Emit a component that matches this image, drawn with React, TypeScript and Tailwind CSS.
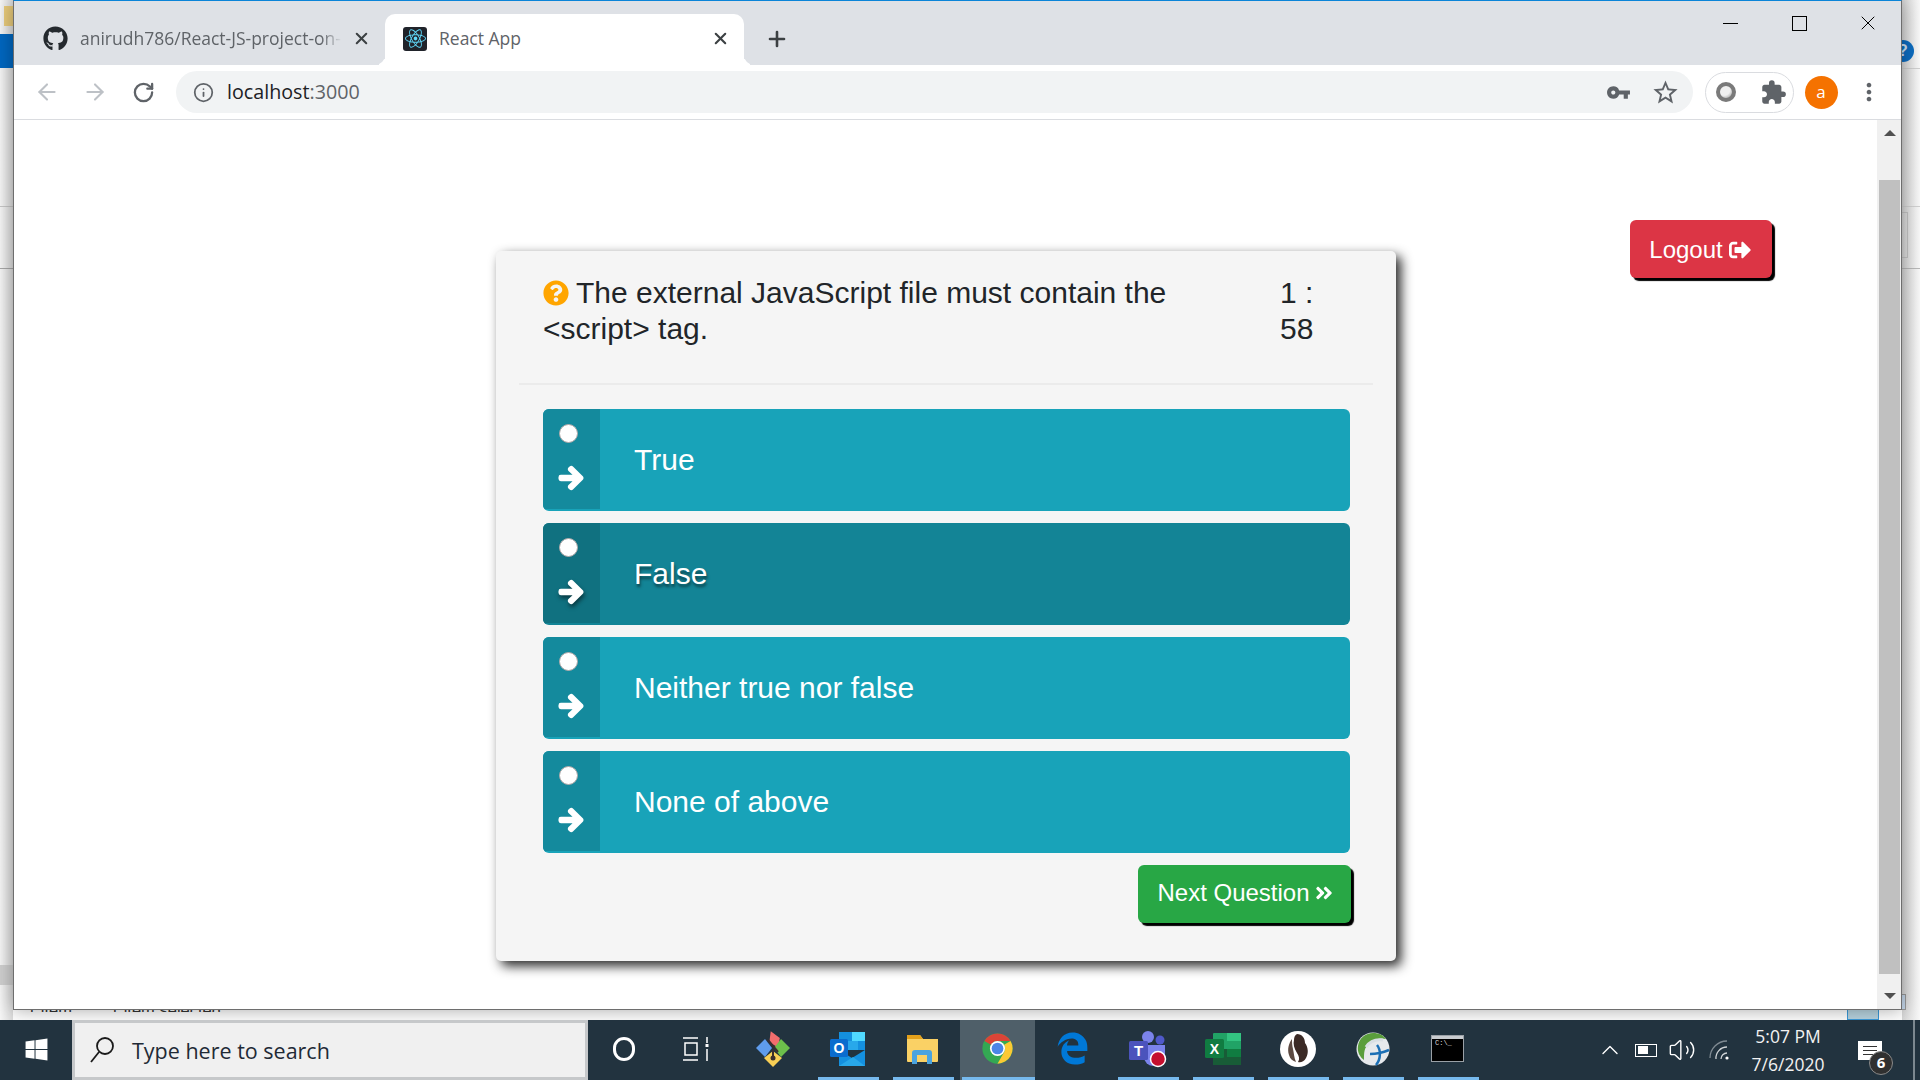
import React from "react";
import { FaGithub, FaReact, FaArrowRight, FaQuestionCircle, FaSignOutAlt, FaAngleDoubleRight, FaWindows, FaEdgeLegacy } from "react-icons/fa";
import { MdVpnKey, MdStarBorder, MdExtension, MdMoreVert } from "react-icons/md";
import { ArrowLeft, ArrowRight, RotateCw, Info, X, Plus, ChevronUp, Volume2 } from "lucide-react";

const options = [
  { label: "True", active: false },
  { label: "False", active: true },
  { label: "Neither true nor false", active: false },
  { label: "None of above", active: false },
];

function Option({ label, active }: { label: string; active: boolean }) {
  return (
    <div className={active ? "flex h-[102px] items-start overflow-hidden rounded-[6px] bg-[#138496]" : "flex h-[102px] items-start overflow-hidden rounded-[6px] bg-[#18a3b9]"}>
      <div className={active ? "flex h-[100px] w-[57px] shrink-0 flex-col items-start bg-[#107180] pl-[16px] pt-[15px]" : "flex h-[100px] w-[57px] shrink-0 flex-col items-start bg-[#148a9d] pl-[16px] pt-[15px]"}>
        <span className="block h-[19px] w-[19px] rounded-full border border-[#b0a8a8] bg-white" />
        <FaArrowRight stroke="currentColor" strokeWidth={45} className={active ? "ml-[-1px] mt-[22px] text-[26px] text-white drop-shadow-[1px_3px_2px_rgba(0,0,0,0.5)]" : "ml-[-1px] mt-[22px] text-[26px] text-white"} />
      </div>
      <div className={active ? "flex h-[102px] items-center pb-[2px] pl-[34px] text-[30px] text-white [text-shadow:1px_3px_3px_rgba(0,0,0,0.5)]" : "flex h-[102px] items-center pb-[2px] pl-[34px] text-[30px] text-white"}>{label}</div>
    </div>
  );
}

function Chrome() {
  return (
    <svg width="33" height="33" viewBox="0 0 48 48">
      <circle cx="24" cy="24" r="22" fill="#34a853" />
      <path d="M24 2a22 22 0 0 1 19.05 11H24a11 11 0 0 0-9.53 5.5L5 13A22 22 0 0 1 24 2z" fill="#db4437" />
      <path d="M43.05 13A22 22 0 0 1 24 46l9.53-16.5A11 11 0 0 0 33.5 18.5L43.05 13z" fill="#fcc934" />
      <circle cx="24" cy="24" r="11" fill="#fff" />
      <circle cx="24" cy="24" r="8.5" fill="#4a86e8" />
    </svg>
  );
}

function Git() {
  return (
    <svg width="34" height="38" viewBox="0 0 34 38">
      <path d="M16 1l8 8-3 9-8-6z" fill="#f26d6d" transform="rotate(-8 17 10)" />
      <path d="M0 18l9-9 7 9-7 9z" fill="#5f9cec" />
      <path d="M34 18l-9-9-7 9 7 9z" fill="#6dbf4b" />
      <path d="M17 37l-9-9 9-7 9 7z" fill="#f8cf55" />
      <path d="M12 10l10 12M17 20v8" stroke="#3a2d2d" strokeWidth="2" />
      <circle cx="17" cy="28" r="2.5" fill="#3a2d2d" />
    </svg>
  );
}

function Outlook() {
  return (
    <svg width="36" height="34" viewBox="0 0 36 34">
      <rect x="9" y="0" width="26" height="18" fill="#1490df" />
      <rect x="22" y="0" width="13" height="9" fill="#50d9ff" />
      <rect x="16" y="9" width="12" height="9" fill="#28a8ea" />
      <path d="M9 18l13 8 13-8v16H9z" fill="#1490df" />
      <path d="M9 34l14-9 12 9z" fill="#28a8ea" />
      <rect x="0" y="7" width="18" height="18" rx="1.5" fill="#0a6cce" />
      <text x="9" y="21" textAnchor="middle" fontSize="14" fontWeight="700" fill="#fff" fontFamily="Liberation Sans, sans-serif">O</text>
    </svg>
  );
}

function Folder() {
  return (
    <svg width="33" height="30" viewBox="0 0 33 30">
      <path d="M1 1h13l3 4h15v22a1 1 0 0 1-1 1H2a1 1 0 0 1-1-1z" fill="#fad165" />
      <path d="M1 1h13l3 4H1z" fill="#e4a11b" />
      <path d="M6 30V19a3 3 0 0 1 3-3h14a3 3 0 0 1 3 3v11h-5v-9H11v9z" fill="#4aa3df" />
    </svg>
  );
}

function Teams() {
  return (
    <svg width="38" height="38" viewBox="0 0 38 38">
      <circle cx="19" cy="7" r="6" fill="#7b83eb" />
      <circle cx="31" cy="10" r="4.5" fill="#5059c9" />
      <path d="M15 15h21v13a8 8 0 0 1-8 8h-4a9 9 0 0 1-9-9z" fill="#7b83eb" />
      <rect x="0" y="11" width="19" height="19" rx="1.5" fill="#4b53bc" />
      <text x="9.5" y="26" textAnchor="middle" fontSize="15" fontWeight="700" fill="#fff" fontFamily="Liberation Sans, sans-serif">T</text>
      <circle cx="29" cy="29" r="7.5" fill="#c50f2e" stroke="#fff" strokeWidth="1.5" />
    </svg>
  );
}

function Excel() {
  return (
    <svg width="36" height="32" viewBox="0 0 36 32">
      <rect x="8" y="0" width="28" height="32" rx="1" fill="#21a366" />
      <rect x="22" y="0" width="14" height="8" fill="#33c481" />
      <rect x="8" y="16" width="14" height="16" fill="#185c37" />
      <rect x="22" y="16" width="14" height="8" fill="#107c41" />
      <rect x="22" y="24" width="14" height="8" fill="#185c37" />
      <rect x="0" y="6" width="19" height="19" rx="1.5" fill="#107c41" />
      <text x="9.5" y="21" textAnchor="middle" fontSize="14" fontWeight="700" fill="#fff" fontFamily="Liberation Sans, sans-serif">X</text>
    </svg>
  );
}

function DBeaver() {
  return (
    <svg width="36" height="36" viewBox="0 0 36 36">
      <circle cx="18" cy="18" r="18" fill="#fff" />
      <path d="M17 3c5 0 8 4 8 9 3 4 4 10 1 15-2 4-6 5-8 4 2-3 1-6-1-9-3-5-4-9-3-13 0-3 1-5 3-6z" fill="#3b2a25" />
      <path d="M12 8c-3 4-5 10-3 16 1 4 4 6 7 7-2-4-2-9-3-13-1-4-1-7-1-10z" fill="#5c4a42" />
    </svg>
  );
}

function AnyConnect() {
  return (
    <svg width="34" height="34" viewBox="0 0 34 34">
      <circle cx="17" cy="17" r="16.5" fill="#e6e9ec" />
      <path d="M2 14C3 6 10 1 17 1c6 0 10 2 13 6-7-2-14 1-19 7-3 3-3 8-3 14C4 25 1 20 2 14z" fill="#5a9e3c" />
      <path d="M10 15c4-6 10-8 17-7" stroke="#d9dfe4" strokeWidth="3" fill="none" />
      <path d="M21 13c4 5 4 14-1 20M14 22c6 0 12-1 19-4" stroke="#1b6fb5" strokeWidth="2.5" fill="none" />
    </svg>
  );
}

function Cmd() {
  return (
    <div className="flex h-[27px] w-[33px] flex-col border border-[#9aa0a6] bg-black">
      <div className="h-[3px] w-full bg-[#c9ccd0]" />
      <span className="pl-[3px] font-['Liberation_Mono',monospace] text-[7px] leading-[9px] text-[#ddd]">C:\_</span>
    </div>
  );
}

function AppButton({ children, on, cur }: { children: React.ReactNode; on?: boolean; cur?: boolean }) {
  return (
    <div className={cur ? "relative flex h-[60px] w-[75px] shrink-0 items-center justify-center bg-[#4f5f69]" : "relative flex h-[60px] w-[75px] shrink-0 items-center justify-center"}>
      <div className="mt-[-3px] flex items-center justify-center">{children}</div>
      {on ? <span className={cur ? "absolute bottom-0 left-[2px] right-0 h-[3px] bg-[#76b9ed]" : "absolute bottom-0 left-[8px] h-[3px] w-[61px] bg-[#76b9ed]"} /> : null}
    </div>
  );
}

export default function App() {
  return (
    <div className="relative h-[1080px] w-[1920px] overflow-hidden bg-white font-['Liberation_Sans',sans-serif]">
      {/* desktop behind the browser window */}
      <div className="absolute left-0 top-0 h-[1020px] w-[13px] bg-gradient-to-r from-[#f6f6f6] to-[#dcdcdc]" />
      <div className="absolute left-[4px] top-[6px] h-[20px] w-[9px] bg-[#e9cb7b]" />
      <div className="absolute left-0 top-[34px] h-[34px] w-[13px] bg-[#0067c0]" />
      <div className="absolute left-0 top-[206px] h-px w-[13px] bg-[#c6c6c6]" />
      <div className="absolute left-0 top-[268px] h-px w-[13px] bg-[#a8a8a8]" />
      <div className="absolute left-0 top-[965px] h-[20px] w-[13px] bg-[#cfcfcf]" />
      <div className="absolute right-0 top-0 h-[1020px] w-[18px] bg-gradient-to-l from-[#f8f8f8] to-[#d6d6d6]" />
      <div className="absolute right-0 top-[68px] h-px w-[18px] bg-[#cfcfcf]" />
      <div className="absolute right-0 top-[206px] h-px w-[18px] bg-[#d0d0d0]" />
      <div className="absolute right-0 top-[268px] h-px w-[18px] bg-[#b8b8b8]" />
      <div className="absolute left-[1900px] top-[212px] h-[46px] w-[8px] border border-[#c4c4c4]" />
      <div className="absolute left-[1892px] top-[40px] flex h-[22px] w-[22px] items-center justify-center rounded-full bg-[#0d6cc0] text-[16px] font-bold text-[#cfe2f3]">?</div>
      <div className="absolute left-[1847px] top-[1000px] h-[20px] w-[32px] border border-[#3a9ad9] bg-[#b8d4e0]" />
      <div className="absolute left-[1879px] top-[994px] h-[16px] w-[27px] border border-[#9a9a9a] bg-[#c5d7ea]" />
      <div className="absolute left-[27px] top-[1002px] h-[10px] overflow-hidden text-[16.5px] leading-[16px] text-[#333]">
        <span className="mr-[38px]">1 item</span>
        <span>1 item selected</span>
      </div>

      {/* browser window */}
      <div className="absolute left-[13px] top-0 flex h-[1010px] w-[1889px] flex-col border-x border-b border-t border-x-[#6e6e6e] border-b-[#6e6e6e] border-t-[#0a84d8] bg-white shadow-[0_0_18px_rgba(0,0,0,0.35)]">
        {/* tab strip */}
        <div className="flex h-[64px] shrink-0 items-end bg-[#dee1e6] font-['Open_Sans',sans-serif] text-[17.5px] text-[#5f6368]">
          <div className="flex h-[51px] w-[371px] shrink-0 items-center pb-[2px] pl-[29px]">
            <FaGithub className="shrink-0 text-[25px] text-[#24292e]" />
            <div className="ml-[12px] w-[262px] overflow-hidden whitespace-nowrap [mask-image:linear-gradient(to_right,black_92%,transparent)]">anirudh786/React-JS-project-on-</div>
            <X size={19} strokeWidth={2.6} className="ml-[10px] shrink-0 text-[#3c4043]" />
          </div>
          <div className="relative flex h-[51px] w-[359px] shrink-0 items-center rounded-t-[10px] bg-white pb-[2px] pl-[18px]">
            <span className="absolute -left-[10px] bottom-0 h-[10px] w-[10px] rounded-br-[10px] shadow-[4px_4px_0_0_#ffffff]" />
            <span className="absolute -right-[10px] bottom-0 h-[10px] w-[10px] rounded-bl-[10px] shadow-[-4px_4px_0_0_#ffffff]" />
            <div className="flex h-[24px] w-[24px] shrink-0 items-center justify-center rounded-[3px] bg-[#20232a]">
              <FaReact className="text-[21px] text-[#61dafb]" />
            </div>
            <div className="ml-[12px] whitespace-nowrap">React App</div>
            <X size={19} strokeWidth={2.6} className="absolute left-[326px] text-[#3c4043]" />
          </div>
          <div className="flex h-[51px] w-[66px] items-center justify-center pb-[2px]">
            <Plus size={24} strokeWidth={2.6} className="text-[#3c4043]" />
          </div>
          <div className="ml-auto flex h-full items-start">
            <div className="flex h-[44px] w-[69px] items-center justify-center"><span className="h-px w-[15px] bg-black" /></div>
            <div className="flex h-[44px] w-[70px] items-center justify-center pr-[1px]"><span className="h-[15px] w-[15px] border border-black" /></div>
            <div className="flex h-[44px] w-[66px] items-center justify-center"><X size={24} strokeWidth={1} className="text-black" /></div>
          </div>
        </div>
        {/* toolbar */}
        <div className="flex h-[55px] shrink-0 items-center border-b border-[#dadce0] bg-white pl-[9px] pr-[11px]">
          <div className="flex w-[48px] justify-center"><ArrowLeft size={26} strokeWidth={1.9} className="text-[#bdc1c6]" /></div>
          <div className="flex w-[48px] justify-center"><ArrowRight size={26} strokeWidth={1.9} className="text-[#bdc1c6]" /></div>
          <div className="flex w-[48px] justify-center"><RotateCw size={23} strokeWidth={2.4} className="text-[#5f6368]" /></div>
          <div className="ml-[9px] flex h-[42px] flex-1 items-center rounded-full bg-[#f1f3f4] pl-[17px] pr-[13px]">
            <Info size={21} strokeWidth={2} className="text-[#5f6368]" />
            <div className="ml-[13px] font-['Open_Sans',sans-serif] text-[19.7px] text-[#202124]">localhost<span className="text-[#5f6368]">:3000</span></div>
            <MdVpnKey className="ml-auto text-[25px] text-[#5f6368]" />
            <MdStarBorder className="ml-[20px] text-[29px] text-[#5f6368]" />
          </div>
          <div className="ml-[12px] flex h-[41px] w-[89px] items-center rounded-full border border-[#dadce0] pl-[10px]">
            <span className="block h-[20px] w-[20px] rounded-full border-[4px] border-[#7a7a7a] bg-[radial-gradient(circle_at_35%_30%,#f0f0f0_50%,#909090)]" />
            <MdExtension className="ml-[24px] text-[27px] text-[#5f6368]" />
          </div>
          <div className="flex w-[54px] justify-center">
            <div className="flex h-[33px] w-[33px] items-center justify-center rounded-full bg-[#f57200] font-['Open_Sans',sans-serif] text-[17px] text-white">a</div>
          </div>
          <div className="flex w-[42px] justify-center"><MdMoreVert className="text-[28px] text-[#5f6368]" /></div>
        </div>
        {/* page + scrollbar */}
        <div className="flex min-h-0 flex-1 bg-white">
          <div className="flex flex-1 items-start">
            <div className="ml-[482px] mt-[131px] h-[710px] w-[900px] shrink-0 rounded-[5px] bg-[#f5f5f5] px-[47px] pt-[24px] shadow-[5px_5px_12px_rgba(0,0,0,0.85)]">
              <div className="flex h-[108px] items-start text-[30px] leading-[36px] text-[#212529]">
                <div className="w-[737px] pr-[50px]">
                  <FaQuestionCircle className="mr-[7px] inline-block align-[-3px] text-[26px] text-[#ffa500]" />
                  The external JavaScript file must contain the &lt;script&gt; tag.
                </div>
                <div className="w-[50px]">1 : 58</div>
              </div>
              <div className="-mx-[24px] h-[2px] bg-[#ebebeb]" />
              <div className="mt-[24px] flex w-[807px] flex-col gap-[12px]">
                {options.map((o) => <Option key={o.label} label={o.label} active={o.active} />)}
              </div>
              <div className="mt-[12px] flex w-[808px] justify-end">
                <button className="flex h-[58px] w-[213px] items-center justify-center rounded-[6px] bg-[#28a745] pb-[2px] pl-[2px] text-[24px] text-white shadow-[3px_3px_1px_#000]">
                  Next Question<FaAngleDoubleRight className="ml-[4px] text-[20px]" />
                </button>
              </div>
            </div>
            <button className="ml-[234px] mt-[100px] flex h-[58px] w-[142px] shrink-0 items-center justify-center rounded-[6px] bg-[#dc3545] pr-[2px] pt-[1px] text-[24px] text-white shadow-[3px_3px_1px_#000]">
              Logout<FaSignOutAlt className="ml-[6px] text-[22px]" />
            </button>
          </div>
          <div className="flex w-[24px] shrink-0 flex-col bg-[#f0f0f0] pl-[2px] pr-px">
            <div className="flex h-[60px] justify-center pt-[10px]"><span className="h-0 w-0 border-x-[6px] border-b-[6px] border-x-transparent border-b-[#505050]" /></div>
            <div className="flex-1 bg-[#c0c0c0]" />
            <div className="flex h-[35px] items-end justify-center pb-[10px]"><span className="h-0 w-0 border-x-[6px] border-t-[6px] border-x-transparent border-t-[#505050]" /></div>
          </div>
        </div>
      </div>

      {/* taskbar */}
      <div className="absolute bottom-0 left-0 flex h-[60px] w-[1920px] items-stretch bg-[#22333f] text-white">
        <div className="flex w-[72px] shrink-0 items-center justify-center pb-[2px]"><FaWindows className="text-[25px] text-white" /></div>
        <div className="flex w-[516px] shrink-0 items-center border-[3px] border-[#c6c8ca] bg-[#f0f0f0] pl-[14px] font-['Open_Sans',sans-serif] text-[21.5px] text-[#1f2a36]">
          <svg width="26" height="28" viewBox="0 0 26 28" fill="none" stroke="#1a1a1a" strokeWidth="1.8">
            <circle cx="16" cy="10" r="8" />
            <path d="M10 16L2 26" />
          </svg>
          <span className="ml-[17px] pt-[3px]">Type here to search</span>
        </div>
        <div className="flex w-[72px] shrink-0 items-center justify-center pb-[2px]">
          <span className="block h-[24px] w-[22px] rounded-full border-[3px] border-white" />
        </div>
        <div className="flex w-[75px] shrink-0 items-center justify-center pb-[2px] pr-[4px]">
          <svg width="26" height="24" viewBox="0 0 26 24" fill="none" stroke="#fff" strokeWidth="1.5">
            <path d="M0 1h15M2 6h12v12H2zM0 23h15M24 0v6M24 12v12" />
            <rect x="22.5" y="7" width="3" height="3" fill="#fff" stroke="none" />
          </svg>
        </div>
        <AppButton><Git /></AppButton>
        <AppButton on><Outlook /></AppButton>
        <AppButton on><Folder /></AppButton>
        <AppButton on cur><Chrome /></AppButton>
        <AppButton><FaEdgeLegacy className="text-[33px] text-[#0078d7]" /></AppButton>
        <AppButton on><Teams /></AppButton>
        <AppButton on><Excel /></AppButton>
        <AppButton on><DBeaver /></AppButton>
        <AppButton on><AnyConnect /></AppButton>
        <AppButton on><Cmd /></AppButton>
        <div className="flex flex-1 items-center pl-[111px]">
          <ChevronUp size={28} strokeWidth={1.2} className="text-white" />
          <div className="ml-[11px] flex h-[13px] w-[22px] items-center border border-white pl-[2px]"><span className="h-[8px] w-[10px] bg-white" /></div>
          <Volume2 size={28} strokeWidth={1.2} className="ml-[11px] text-white" />
          <svg width="24" height="24" viewBox="0 0 24 24" fill="none" className="ml-[13px]" stroke="#cfd3d6" strokeWidth="1.3">
            <path d="M1 20A17 17 0 0 1 18 3" stroke="#7f8a92" />
            <path d="M7 21A11 11 0 0 1 18 9" />
            <path d="M12 21a6 6 0 0 1 6-6" />
            <circle cx="18" cy="20" r="1.6" fill="#fff" stroke="none" />
          </svg>
          <div className="ml-[13px] flex w-[84px] flex-col items-center font-['Open_Sans',sans-serif] text-[17.5px] leading-[28px] text-[#f2f2f2]">
            <span>5:07 PM</span>
            <span>7/6/2020</span>
          </div>
          <div className="relative ml-[28px] h-[19px] w-[24px] bg-white">
            <span className="absolute left-[5px] top-[5px] h-px w-[14px] bg-[#333]" />
            <span className="absolute left-[5px] top-[9px] h-px w-[14px] bg-[#333]" />
            <span className="absolute left-[5px] top-[13px] h-px w-[14px] bg-[#333]" />
            <span className="absolute left-[11px] top-[10px] flex h-[24px] w-[24px] items-center justify-center rounded-full border border-[#8a8a8a] bg-[#303030] font-['Open_Sans',sans-serif] text-[15px] font-bold text-white">6</span>
          </div>
        </div>
        <div className="absolute bottom-0 right-[5px] top-0 w-[2px] bg-[#7c8890]" />
      </div>
    </div>
  );
}
